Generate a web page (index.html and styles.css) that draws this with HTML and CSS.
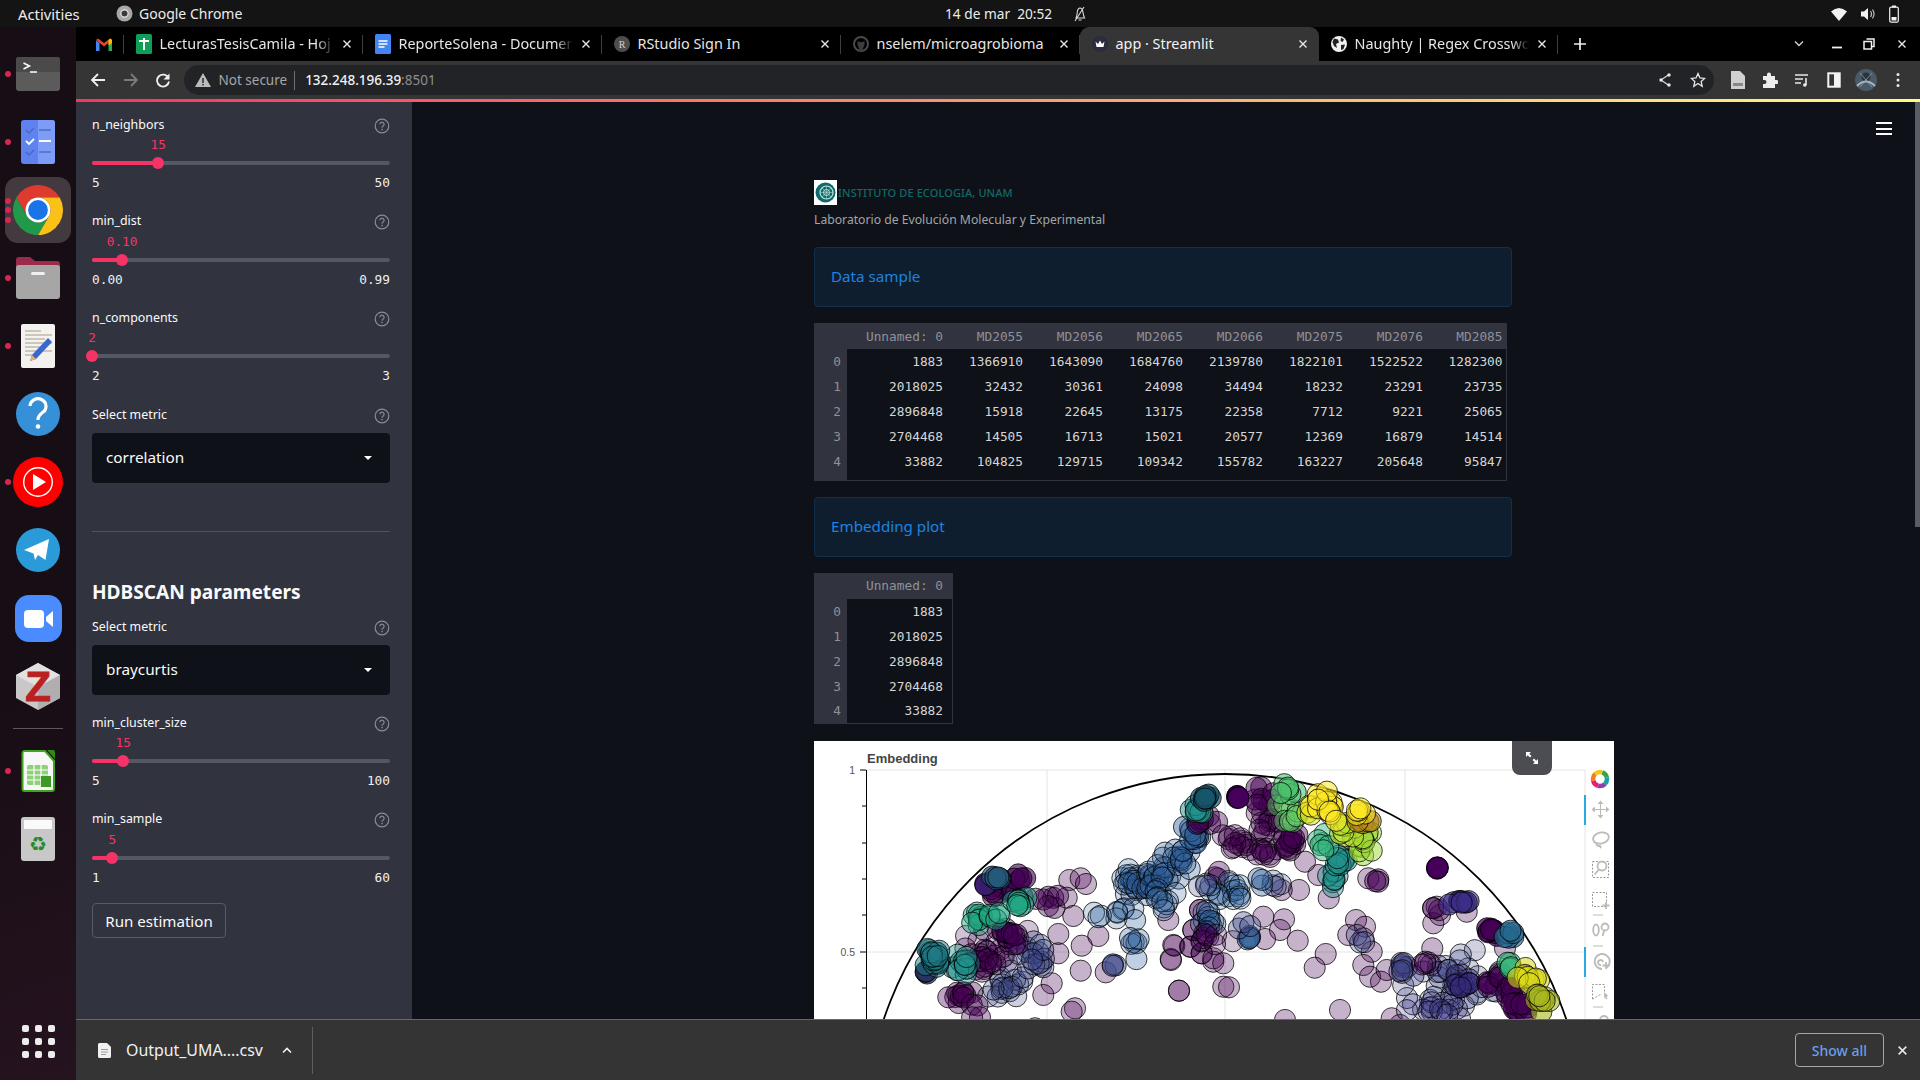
FILE: index.html
```html
<!DOCTYPE html>
<html lang="en">
<head>
<meta charset="utf-8">
<title>app · Streamlit</title>
<link rel="stylesheet" href="styles.css">
</head>
<body>
<svg class="defs" width="0" height="0" aria-hidden="true">
  <symbol id="help" viewBox="0 0 16 16">
    <circle cx="8" cy="8" r="6.8" fill="none" stroke="#8b8c94" stroke-width="1.2"/>
    <path d="M5.9 6.3a2.1 2.1 0 1 1 3.3 1.7c-.8.5-1.2.9-1.2 1.7" fill="none" stroke="#8b8c94" stroke-width="1.2"/>
    <circle cx="8" cy="11.6" r=".8" fill="#8b8c94"/>
  </symbol>
  <symbol id="close" viewBox="0 0 10 10"><path d="M1.5 1.5l7 7M8.5 1.5l-7 7" stroke="#e8e8e8" stroke-width="1.4" fill="none"/></symbol>
</svg>

<header class="topbar">
  <div class="top-left">
    <span class="activities">Activities</span>
    <span class="app-name">
      <svg width="17" height="17" viewBox="0 0 17 17"><circle cx="8.5" cy="8.5" r="8" fill="#a8a8a8"/><circle cx="8.5" cy="8.5" r="3.6" fill="#3a3a3a" stroke="#e5e5e5" stroke-width="1.2"/></svg>
      Google Chrome
    </span>
  </div>
  <div class="top-clock">
    <span>14 de mar&nbsp; 20:52</span>
    <svg width="14" height="16" viewBox="0 0 14 16"><path d="M3 12c1-2 1-4 1.400-6.500C4.800 3 6 2 7 2s2.400 1 2.800 3.500C10.200 8 10.500 10 11.500 12zM5.500 14h3M2 15L11 1" fill="none" stroke="#d8d8d8" stroke-width="1.100"/></svg>
  </div>
  <div class="top-status">
    <svg width="16" height="14" viewBox="0 0 16 14"><path d="M0 4.500Q8-2.500 16 4.500L8 14z" fill="#f2f2f2"/></svg>
    <svg width="16" height="14" viewBox="0 0 16 14"><path d="M1 4.500h3L8 1v12L4 9.500H1z" fill="#f2f2f2"/><path d="M10.500 4q2 3 0 6M12.500 2.500q3 4.500 0 9" fill="none" stroke="#bdbdbd" stroke-width="1.200"/></svg>
    <svg width="10" height="18" viewBox="0 0 10 18"><rect x=".7" y="2.200" width="8.600" height="15" rx="1.500" fill="none" stroke="#f2f2f2" stroke-width="1.200"/><rect x="3" y=".5" width="4" height="2" fill="#f2f2f2"/><rect x="2.500" y="12" width="5" height="3.500" fill="#f2f2f2"/></svg>
  </div>
</header>

<div class="desktop">
  <nav class="dock">
    <div class="slot"><span class="dots"><i></i></span>
      <svg width="44" height="34" viewBox="0 0 44 34"><rect width="44" height="34" rx="3" fill="#5b5b5b"/><path d="M0 15V3a3 3 0 0 1 3-3h38a3 3 0 0 1 3 3v12z" fill="#4a4a4a"/><path d="M7.500 6l6 3-6 3" fill="none" stroke="#fff" stroke-width="1.500"/><path d="M14 15h7" stroke="#fff" stroke-width="1.500"/></svg>
    </div>
    <div class="slot"><span class="dots"><i></i></span>
      <svg width="34" height="44" viewBox="0 0 34 44"><rect width="34" height="44" rx="3" fill="#5f82ee"/><path d="M17 0h14a3 3 0 0 1 3 3v38a3 3 0 0 1-3 3H17z" fill="#7d9cf6"/><path d="M5 10l3 3 5-5M5 32l3 3 5-5" fill="none" stroke="#4a68c8" stroke-width="1.500"/><path d="M5 21l3 3 5-5M18 21h12" fill="none" stroke="#fff" stroke-width="1.800"/><path d="M18 10h12M18 32h12" stroke="#4f6cc6" stroke-width="1.500"/></svg>
    </div>
    <div class="slot">
      <span class="dots"><i></i><i></i><i></i></span>
      <div class="running">
        <svg width="50" height="50" viewBox="0 0 48 48"><path d="M3.200 12A24 24 0 0 1 44.800 12H24A12 12 0 0 0 13.600 30z" fill="#dd3b2f"/><path d="M44.800 12A24 24 0 0 1 24 48L34.400 30A12 12 0 0 0 24 12z" fill="#fbc116"/><path d="M24 48A24 24 0 0 1 3.200 12L13.600 30A12 12 0 0 0 34.400 30z" fill="#22994a"/><circle cx="24" cy="24" r="12" fill="#fff"/><circle cx="24" cy="24" r="9.500" fill="#1a73e8"/></svg>
      </div>
    </div>
    <div class="slot"><span class="dots"><i></i></span>
      <svg width="44" height="42" viewBox="0 0 44 42"><path d="M0 12V3a3 3 0 0 1 3-3h11l5 4h22a3 3 0 0 1 3 3v8z" fill="#9c2a4a"/><rect y="8" width="44" height="34" rx="3" fill="#a6a6a6"/><rect x="15" y="15" width="14" height="3" rx="1.500" fill="#f0f0f0"/></svg>
    </div>
    <div class="slot"><span class="dots"><i></i></span>
      <svg width="34" height="44" viewBox="0 0 34 44"><rect width="34" height="44" rx="2" fill="#f4f2ee"/><path d="M4 7h16M4 11h27M4 15h20M4 19h27M4 23h16M4 27h27M4 31h14" stroke="#bdb9ac" stroke-width="1.400"/><path d="M11 31L27 14l4 4-16 17-6 2z" fill="#3a66d0"/><path d="M9 37l2-6 4 4z" fill="#e8b070"/></svg>
    </div>
    <div class="slot">
      <svg width="44" height="44" viewBox="0 0 44 44"><circle cx="22" cy="22" r="22" fill="#3590d8"/><path d="M14 14a8 7.500 0 1 1 12.500 6.500c-2.800 2-4.500 3.500-4.500 7.500" fill="none" stroke="#fff" stroke-width="3.200"/><circle cx="22" cy="34.500" r="2.300" fill="#fff"/></svg>
    </div>
    <div class="slot"><span class="dots"><i></i></span>
      <svg width="50" height="50" viewBox="0 0 50 50"><circle cx="25" cy="25" r="25" fill="#fe0000"/><circle cx="25" cy="25" r="14.300" fill="none" stroke="#fff" stroke-width="1.400"/><path d="M20 17l13 8-13 8z" fill="#fff"/></svg>
    </div>
    <div class="slot">
      <svg width="44" height="44" viewBox="0 0 44 44"><circle cx="22" cy="22" r="22" fill="#2a9bd8"/><path d="M8 22L33 11 29.500 32 22 27l-3 5-1.500-6.500z" fill="#fff"/></svg>
    </div>
    <div class="slot">
      <svg width="47" height="47" viewBox="0 0 47 47"><rect width="47" height="47" rx="14" fill="#4a8cff"/><rect x="9" y="15" width="20" height="18" rx="4" fill="#fff"/><path d="M31 22l7-6v16l-7-6z" fill="#fff"/></svg>
    </div>
    <div class="slot">
      <svg width="44" height="47" viewBox="0 0 44 47"><path d="M22 0l22 12v23L22 47 0 35V12z" fill="#c9c7c7"/><path d="M22 0l22 12L22 24 0 12z" fill="#e2e0e0"/><path d="M22 47l22-12V12L22 24z" fill="#b0aeae"/><text class="zotero" x="22" y="38" text-anchor="middle">Z</text></svg>
    </div>
    <div class="dock-rule"><span></span></div>
    <div class="slot"><span class="dots"><i></i></span>
      <svg width="34" height="43" viewBox="0 0 34 43"><path d="M1.500 3a2 2 0 0 1 2-2H24l9 10v28a2 2 0 0 1-2 2H3.500a2 2 0 0 1-2-2z" fill="#f7f7f7" stroke="#3fa41f" stroke-width="2"/><path d="M26 0h6a2 2 0 0 1 2 2v7z" fill="#2f8a18"/><rect x="6" y="15" width="21" height="20" rx="2" fill="#8fd07a"/><path d="M6 20h21M6 25h21M6 30h21M13 15v20M20 15v20" stroke="#fff" stroke-width="1.200"/><rect x="20" y="26" width="10" height="11" fill="#3d9a25"/></svg>
    </div>
    <div class="slot">
      <svg width="34" height="44" viewBox="0 0 34 44"><rect width="34" height="44" rx="3" fill="#c8c8c8"/><rect x="3" y="3" width="28" height="9" rx="1" fill="#fafafa"/><text class="recycle" x="17" y="34" text-anchor="middle">♻</text></svg>
    </div>
    <div class="apps"><i></i><i></i><i></i><i></i><i></i><i></i><i></i><i></i><i></i></div>
  </nav>

  <div class="browser">
    <div class="tabstrip">
      <div class="tab pinned">
        <svg width="16" height="13" viewBox="0 0 16 13"><path d="M0 2.500V13h3.500V5z" fill="#4285f4"/><path d="M16 2.500V13h-3.500V5z" fill="#34a853"/><path d="M0 2L2 .5 8 5l6-4.500L16 2 8 8.500z" fill="#ea4335"/><path d="M12.500 2l2-1.500L16 2v3l-3.500 2.500z" fill="#fbbc04"/></svg>
      </div>
      <div class="tab">
        <svg width="16" height="20" viewBox="0 0 16 20"><rect width="16" height="20" rx="1.500" fill="#0f9d58"/><path d="M3 7h10M8 4v12" stroke="#fff" stroke-width="2"/></svg>
        <span class="tab-title fade">LecturasTesisCamila - Hoj</span>
        <svg class="tab-x"><use href="#close"/></svg>
      </div>
      <div class="tab">
        <svg width="16" height="20" viewBox="0 0 16 20"><rect width="16" height="20" rx="1.500" fill="#4285f4"/><path d="M3.500 7h9M3.500 10h9M3.500 13h6" stroke="#fff" stroke-width="1.500"/></svg>
        <span class="tab-title fade">ReporteSolena - Documen</span>
        <svg class="tab-x"><use href="#close"/></svg>
      </div>
      <div class="tab">
        <svg width="16" height="16" viewBox="0 0 16 16"><circle cx="8" cy="8" r="8" fill="#4d4d4d"/><text class="fav-r" x="8" y="11.500" text-anchor="middle">R</text></svg>
        <span class="tab-title">RStudio Sign In</span>
        <svg class="tab-x"><use href="#close"/></svg>
      </div>
      <div class="tab">
        <svg width="16" height="16" viewBox="0 0 16 16"><circle cx="8" cy="8" r="7" fill="none" stroke="#4a4a4a" stroke-width="2"/><path d="M6 15v-3L4.500 9V5l2 1h3l2-1v4L10 12v3z" fill="#3c3c3c"/></svg>
        <span class="tab-title">nselem/microagrobioma</span>
        <svg class="tab-x"><use href="#close"/></svg>
      </div>
      <div class="tab active">
        <svg width="16" height="16" viewBox="0 0 16 16"><circle cx="8" cy="8" r="8" fill="#2a2d3e"/><path d="M3.500 5.500L6 8l2-3.500L10 8l2.500-2.500L11.500 11h-7z" fill="#fff"/></svg>
        <span class="tab-title">app · Streamlit</span>
        <svg class="tab-x"><use href="#close"/></svg>
      </div>
      <div class="tab">
        <svg width="16" height="16" viewBox="0 0 16 16"><circle cx="8" cy="8" r="8" fill="#f1f1f1"/><path d="M3 2.500l4 1 1 3-3 1.500 1 4L3 10 1.500 6zM10 1.500l3 2-1.500 2.500-2-1zM10 9l4-.5-1.500 4.500-2.500 1z" fill="#202124"/></svg>
        <span class="tab-title fade">Naughty | Regex Crosswo</span>
        <svg class="tab-x"><use href="#close"/></svg>
      </div>
      <svg class="tab-plus" width="14" height="14" viewBox="0 0 14 14"><path d="M7 1v12M1 7h12" stroke="#f0f0f0" stroke-width="1.700"/></svg>
      <div class="win-controls">
        <svg width="12" height="8" viewBox="0 0 12 8"><path d="M2 1.500l4 4 4-4" fill="none" stroke="#d8d8d8" stroke-width="1.300"/></svg>
        <svg width="10" height="10" viewBox="0 0 10 10"><path d="M0 8.500h10" stroke="#f0f0f0" stroke-width="1.800"/></svg>
        <svg width="12" height="12" viewBox="0 0 12 12"><path d="M3.500 1h7.500v7.500H9" fill="none" stroke="#f0f0f0" stroke-width="1.500"/><rect x="1" y="3.500" width="7.500" height="7.500" fill="none" stroke="#f0f0f0" stroke-width="1.500"/></svg>
        <svg width="10" height="10"><use href="#close"/></svg>
      </div>
    </div>

    <div class="toolbar">
      <div class="nav-btn"><svg width="16" height="16" viewBox="0 0 16 16"><path d="M15 8H2M8 2L2 8l6 6" fill="none" stroke="#f0f0f0" stroke-width="1.800"/></svg></div>
      <div class="nav-btn"><svg width="16" height="16" viewBox="0 0 16 16"><path d="M1 8h13M8 2l6 6-6 6" fill="none" stroke="#7b7b7b" stroke-width="1.800"/></svg></div>
      <div class="nav-btn"><svg width="16" height="16" viewBox="0 0 16 16"><path d="M13.500 6A6 6 0 1 0 14 9.500" fill="none" stroke="#f0f0f0" stroke-width="1.800"/><path d="M14.500 1.500v6h-6z" fill="#f0f0f0"/></svg></div>
      <div class="omnibox">
        <svg width="16" height="14" viewBox="0 0 16 14"><path d="M8 0l8 14H0z" fill="#bcbcbc"/><path d="M8 5v5M8 11v1.500" stroke="#202124" stroke-width="1.400"/></svg>
        <span class="not-secure">Not secure</span>
        <span class="url"><b>132.248.196.39</b>:8501</span>
        <svg class="omni-icon" width="14" height="14" viewBox="0 0 14 14"><path d="M11 1.500L3 7l8 5.500" fill="none" stroke="#d8d8d8" stroke-width="1.200"/><circle cx="11" cy="2" r="1.700" fill="#e8e8e8"/><circle cx="3" cy="7" r="1.700" fill="#e8e8e8"/><circle cx="11" cy="12" r="1.700" fill="#e8e8e8"/></svg>
        <svg class="omni-icon" width="16" height="16" viewBox="0 0 16 16"><path d="M8 1.500l2 4.400 4.700.5-3.500 3.200 1 4.700L8 11.500l-4.200 2.800 1-4.700L1.300 6.400 6 5.900z" fill="none" stroke="#e8e8e8" stroke-width="1.300"/></svg>
      </div>
      <div class="actions">
        <div class="nav-btn"><svg width="14" height="18" viewBox="0 0 14 18"><path d="M0 0h9l5 5v13H0z" fill="#d0d0d0"/><rect x="2" y="12" width="10" height="3" fill="#888"/></svg></div>
        <div class="nav-btn"><svg width="16" height="16" viewBox="0 0 16 16"><path d="M1 4h4V2.500a2 2 0 0 1 4 0V4h4v4h1.500a2 2 0 0 1 0 4H13v4H1v-4h1.500a2 2 0 0 0 0-4H1z" fill="#ededed"/></svg></div>
        <div class="nav-btn"><svg width="16" height="14" viewBox="0 0 16 14"><path d="M1 2h13M1 6h8M1 10h6" stroke="#e8e8e8" stroke-width="1.500"/><path d="M12 5v7" stroke="#e8e8e8" stroke-width="1.600"/><circle cx="10.800" cy="12" r="1.800" fill="#e8e8e8"/></svg></div>
        <div class="nav-btn"><svg width="14" height="16" viewBox="0 0 14 16"><rect x="1.300" y="1.300" width="11.400" height="13.400" fill="none" stroke="#f4f4f4" stroke-width="2"/><rect x="7" y="1" width="6" height="14" fill="#f4f4f4"/></svg></div>
        <div class="nav-btn"><svg width="24" height="24" viewBox="0 0 24 24"><circle cx="12" cy="12" r="11" fill="#4a5a68"/><circle cx="12" cy="9" r="4.500" fill="#2a343c"/><path d="M3 18q9-9 18 0" fill="none" stroke="#a9b8c2" stroke-width="2"/><path d="M6 5l12 14M18 5L6 19" stroke="#8fa0ab" stroke-width=".8"/></svg></div>
        <div class="nav-btn"><svg width="4" height="16" viewBox="0 0 4 16"><circle cx="2" cy="2.500" r="1.500" fill="#e8e8e8"/><circle cx="2" cy="8" r="1.500" fill="#e8e8e8"/><circle cx="2" cy="13.500" r="1.500" fill="#e8e8e8"/></svg></div>
      </div>
    </div>
    <div class="accent"></div>

    <div class="page">
      <aside class="sidebar">
        <section class="slider">
          <div class="field-label"><span>n_neighbors</span><svg class="help"><use href="#help"/></svg></div>
          <div class="value-row"><span class="value" style="left:22.2%">15</span></div>
          <div class="track"><span class="fill" style="width:22.2%"></span><span class="thumb" style="left:22.2%"></span></div>
          <div class="ticks"><span>5</span><span>50</span></div>
        </section>
        <section class="slider">
          <div class="field-label"><span>min_dist</span><svg class="help"><use href="#help"/></svg></div>
          <div class="value-row"><span class="value" style="left:10.1%">0.10</span></div>
          <div class="track"><span class="fill" style="width:10.1%"></span><span class="thumb" style="left:10.1%"></span></div>
          <div class="ticks"><span>0.00</span><span>0.99</span></div>
        </section>
        <section class="slider">
          <div class="field-label"><span>n_components</span><svg class="help"><use href="#help"/></svg></div>
          <div class="value-row"><span class="value" style="left:0%">2</span></div>
          <div class="track"><span class="thumb" style="left:0%"></span></div>
          <div class="ticks"><span>2</span><span>3</span></div>
        </section>
        <section class="select-field">
          <div class="field-label"><span>Select metric</span><svg class="help"><use href="#help"/></svg></div>
          <div class="select"><span>correlation</span><i class="caret"></i></div>
        </section>
        <hr class="rule">
        <h2 class="side-heading">HDBSCAN parameters</h2>
        <section class="select-field second">
          <div class="field-label"><span>Select metric</span><svg class="help"><use href="#help"/></svg></div>
          <div class="select"><span>braycurtis</span><i class="caret"></i></div>
        </section>
        <section class="slider">
          <div class="field-label"><span>min_cluster_size</span><svg class="help"><use href="#help"/></svg></div>
          <div class="value-row"><span class="value" style="left:10.5%">15</span></div>
          <div class="track"><span class="fill" style="width:10.5%"></span><span class="thumb" style="left:10.5%"></span></div>
          <div class="ticks"><span>5</span><span>100</span></div>
        </section>
        <section class="slider">
          <div class="field-label"><span>min_sample</span><svg class="help"><use href="#help"/></svg></div>
          <div class="value-row"><span class="value" style="left:6.8%">5</span></div>
          <div class="track"><span class="fill" style="width:6.8%"></span><span class="thumb" style="left:6.8%"></span></div>
          <div class="ticks"><span>1</span><span>60</span></div>
        </section>
        <button class="run">Run estimation</button>
      </aside>

      <main class="main">
        <button class="hamburger" aria-label="Menu"><i></i><i></i><i></i></button>
        <div class="scroll-thumb"></div>
        <div class="block">
          <div class="logo">
            <svg width="23" height="25" viewBox="0 0 23 25"><rect width="23" height="25" fill="#fff"/><circle cx="11.500" cy="12.500" r="10" fill="#0f6b6b"/><circle cx="12.500" cy="12.500" r="6.500" fill="none" stroke="#bfe0dc" stroke-width="1.200"/><circle cx="12.500" cy="12.500" r="3" fill="none" stroke="#bfe0dc"/><path d="M6 12.500h13M12.500 6v13M8 8l9 9M17 8l-9 9" stroke="#bfe0dc" stroke-width=".5"/></svg>
            <span>INSTITUTO DE ECOLOGIA, UNAM</span>
          </div>
          <p class="lab">Laboratorio de Evolución Molecular y Experimental</p>
          <div class="stack">
            <div class="info">Data sample</div>
            <table class="frame wide">
              <thead><tr><th></th><th>Unnamed: 0</th><th>MD2055</th><th>MD2056</th><th>MD2065</th><th>MD2066</th><th>MD2075</th><th>MD2076</th><th>MD2085</th></tr></thead>
              <tbody>
                <tr><th>0</th><td>1883</td><td>1366910</td><td>1643090</td><td>1684760</td><td>2139780</td><td>1822101</td><td>1522522</td><td>1282300</td></tr>
                <tr><th>1</th><td>2018025</td><td>32432</td><td>30361</td><td>24098</td><td>34494</td><td>18232</td><td>23291</td><td>23735</td></tr>
                <tr><th>2</th><td>2896848</td><td>15918</td><td>22645</td><td>13175</td><td>22358</td><td>7712</td><td>9221</td><td>25065</td></tr>
                <tr><th>3</th><td>2704468</td><td>14505</td><td>16713</td><td>15021</td><td>20577</td><td>12369</td><td>16879</td><td>14514</td></tr>
                <tr><th>4</th><td>33882</td><td>104825</td><td>129715</td><td>109342</td><td>155782</td><td>163227</td><td>205648</td><td>95847</td></tr>
                <tr class="spare"><th></th><td colspan="8"></td></tr>
              </tbody>
            </table>
            <div class="info">Embedding plot</div>
            <table class="frame narrow">
              <thead><tr><th></th><th>Unnamed: 0</th></tr></thead>
              <tbody>
                <tr><th>0</th><td>1883</td></tr>
                <tr><th>1</th><td>2018025</td></tr>
                <tr><th>2</th><td>2896848</td></tr>
                <tr><th>3</th><td>2704468</td></tr>
                <tr><th>4</th><td>33882</td></tr>
              </tbody>
            </table>
            <div class="plot">
              <div class="expand"><svg width="14" height="14" viewBox="0 0 14 14"><path d="M1 1h5L4.300 2.700 6.500 5 5 6.500 2.700 4.300 1 6zM13 13H8l1.700-1.700L7.500 9 9 7.500l2.300 2.200L13 8z" fill="#fff"/></svg></div>
              <svg class="chart" width="800" height="400" viewBox="814 741 800 400">
                <g class="grid">
                  <path d="M866 770H1585M866 952H1585M1047 770V1141M1225 770V1141M1405 770V1141M1585 770V1141"/>
                </g>
                <circle class="bound" cx="1225" cy="1134" r="360"/>
                <g id="points"></g>
                <path class="axis" d="M866.500 770V1141M860 770H866M860 952H866M862 806H866M862 843H866M862 879H866M862 915H866M862 988H866"/>
                <text class="plot-title" x="867" y="763">Embedding</text>
                <text class="tick-label" x="855" y="774" text-anchor="end">1</text>
                <text class="tick-label" x="855" y="956" text-anchor="end">0.5</text>

                <g class="bk-logo">
                  <circle cx="1600" cy="779" r="7" stroke="#37a34a" stroke-dasharray="7.300 36.700" stroke-dashoffset="9"/>
                  <circle cx="1600" cy="779" r="7" stroke="#18a0a8" stroke-dasharray="7.300 36.700" stroke-dashoffset="1.700"/>
                  <circle cx="1600" cy="779" r="7" stroke="#8e3fa8" stroke-dasharray="7.300 36.700" stroke-dashoffset="-5.600"/>
                  <circle cx="1600" cy="779" r="7" stroke="#e8206e" stroke-dasharray="7.300 36.700" stroke-dashoffset="-12.900"/>
                  <circle cx="1600" cy="779" r="7" stroke="#f47b20" stroke-dasharray="7.300 36.700" stroke-dashoffset="-20.200"/>
                  <circle cx="1600" cy="779" r="7" stroke="#f5c518" stroke-dasharray="7.300 36.700" stroke-dashoffset="-27.500"/>
                </g>
                <rect class="tool-on" x="1584" y="795" width="2" height="30"/>
                <rect class="tool-on" x="1584" y="947" width="2" height="30"/>
                <g class="tool">
                  <path d="M1600.500 802v15M1593 809.500h15"/>
                  <path class="solid" d="M1600.500 800.500l3 3.500h-6zM1600.500 818.500l3-3.500h-6zM1591.500 809.500l3.500-3v6zM1609.500 809.500l-3.500-3v6z"/>
                  <ellipse class="thick" cx="1601" cy="838" rx="8" ry="5.500" transform="rotate(-15 1601 838)"/>
                  <path class="thick" d="M1597 843c-1 2 0 3 2 3s2 1 1 2"/>
                  <rect class="dash" x="1592.500" y="861.500" width="16" height="16"/>
                  <circle class="thick" cx="1602" cy="866" r="4.500" fill="#fff"/>
                  <path class="thick" d="M1599 869.500l-4.500 5"/>
                  <rect class="dash" x="1592.500" y="892.500" width="14" height="14"/>
                  <path class="thick" d="M1606 902v7M1602.500 905.500h7"/>
                  <path d="M1593 915h10M1593 946h10M1593 1007h10"/>
                  <ellipse class="thick" cx="1596" cy="930" rx="2.800" ry="5.500"/>
                  <circle class="thick" cx="1605" cy="927" r="3.500"/>
                  <path class="thick" d="M1604 931l-1.500 5"/>
                  <path class="thick" d="M1606 968a7.500 7.500 0 1 0-4 1"/>
                  <path class="thick" d="M1603 962a2.500 2.500 0 1 0-2 3"/>
                  <path class="thick" d="M1606 962v7M1602.500 965.500h7"/>
                  <path class="dash" d="M1592.500 999V984.500h12v8M1592.500 999l9-5"/>
                  <path class="solid" d="M1604 992l4.500 4-2 .5 1 2.500-1.500.5-1-2.500-1 1.500z"/>
                  <circle class="thick" cx="1604" cy="1020" r="4"/>
                </g>
              </svg>
            </div>
          </div>
        </div>
      </main>
    </div>

    <footer class="downloads">
      <div class="dl-item">
        <svg width="13" height="15" viewBox="0 0 13 15"><path d="M1.500 0H9l4 4v9.500a1.500 1.500 0 0 1-1.500 1.500h-10A1.500 1.500 0 0 1 0 13.500v-12A1.500 1.500 0 0 1 1.500 0z" fill="#f1f1f1"/><path d="M3 6.500h7M3 9h7M3 11.500h5" stroke="#9a9a9a"/></svg>
        <span class="dl-name">Output_UMA....csv</span>
        <svg width="10" height="7" viewBox="0 0 10 7"><path d="M1 5.500l4-4 4 4" fill="none" stroke="#f1f1f1" stroke-width="1.600"/></svg>
      </div>
      <button class="show-all">Show all</button>
      <svg class="dl-close" width="11" height="11"><use href="#close"/></svg>
    </footer>
  </div>
</div>
<script src="plot.js"></script>
</body>
</html>
```

FILE: styles.css
```css
* { box-sizing: border-box; }
html, body { margin: 0; height: 100%; }
body {
  width: 1920px; height: 1080px; overflow: hidden;
  display: flex; flex-direction: column;
  background: #0e1117; color: #fafafa;
  font-family: "Noto Sans", sans-serif;
}
.defs { position: absolute; }
svg { display: block; flex: none; }

/* desktop top bar */
.topbar {
  height: 27px; flex: none; background: #141414;
  display: grid; grid-template-columns: 945px 1fr auto; align-items: center;
  font-size: 14px; color: #ececec;
}
.top-left { display: flex; align-items: center; padding-left: 18px; }
.activities { width: 98px; font-size: 14.800px; }
.app-name { display: flex; align-items: center; gap: 6px; }
.top-clock { display: flex; align-items: center; gap: 21px; font-size: 13.700px; }
.top-status { display: flex; align-items: center; gap: 13px; padding-right: 21px; }

.desktop { flex: 1; display: flex; min-height: 0; }

/* dock */
.dock {
  width: 76px; flex: none; display: flex; flex-direction: column; align-items: stretch;
  padding: 13px 0 22px;
  background: linear-gradient(160deg, #170d14 60%, #25131f);
}
.slot { height: 68px; flex: none; display: flex; align-items: center; justify-content: center; position: relative; }
.dots { position: absolute; left: 5px; top: 0; bottom: 0; z-index: 1; display: flex; flex-direction: column; justify-content: center; gap: 3.500px; }
.dots i { width: 6px; height: 6px; border-radius: 50%; background: #d8274f; display: block; }
.running { width: 66px; height: 66px; border-radius: 13px; background: #423a3e; display: flex; align-items: center; justify-content: center; }
.dock-rule { height: 17px; flex: none; display: flex; align-items: center; padding: 0 13px; }
.dock-rule span { flex: 1; height: 1px; background: #5d565a; }
.apps { margin-top: auto; align-self: center; display: grid; grid-template-columns: repeat(3, 7px); gap: 6px; }
.apps i { width: 7px; height: 7px; border-radius: 2px; background: #ececec; display: block; }
.zotero { font: bold 42px "Liberation Sans", sans-serif; fill: #b8211f; stroke: #b8211f; stroke-width: 1; }
.recycle { font: 20px "DejaVu Sans", sans-serif; fill: #2a8a2a; }

/* browser */
.browser { flex: 1; min-width: 0; display: flex; flex-direction: column; }
.tabstrip { height: 34px; flex: none; background: #000; display: flex; align-items: center; padding-left: 8px; }
.tab {
  width: 239px; height: 34px; flex: none; display: flex; align-items: center; gap: 8px;
  padding: 0 11px 0 12px; position: relative; font-size: 14.400px; color: #e6e6e6;
}
.tab::after { content: ""; position: absolute; right: 0; top: 8px; bottom: 7px; width: 1px; background: #3f3f3f; }
.tab.pinned { width: 39.500px; padding: 0 0 0 12px; }
.tab.active { background: #353535; border-radius: 9px 9px 0 0; color: #f2f2f2; }
.tab.active::after { display: none; }
.tab-title { flex: 1; min-width: 0; white-space: nowrap; margin-top: -2px; }
.tab-title.fade { -webkit-mask-image: linear-gradient(90deg, #000 90%, transparent); mask-image: linear-gradient(90deg, #000 90%, transparent); }
.tab-x { width: 10px; height: 10px; flex: none; }
.fav-r { font: 10px "Liberation Serif", serif; fill: #d0d0d0; }
.tab-plus { margin-left: 15px; }
.win-controls { margin-left: auto; display: flex; align-items: center; padding-right: 13px; }
.win-controls svg:nth-child(1) { margin-right: 27px; }
.win-controls svg:nth-child(2) { margin-right: 21px; }
.win-controls svg:nth-child(3) { margin-right: 22px; }

.toolbar { height: 38px; flex: none; background: #353535; display: flex; align-items: center; padding: 0 6px 0 6px; }
.nav-btn { width: 32.500px; height: 32px; flex: none; display: flex; align-items: center; justify-content: center; }
.omnibox {
  flex: 1; height: 30px; margin: 0 8px 0 4px; border-radius: 15px; background: #222327;
  display: flex; align-items: center; padding: 0 8px 0 11px; font-size: 13.500px;
}
.not-secure { color: #a6a6a6; margin-left: 8px; padding-right: 7px; border-right: 1px solid #707070; line-height: 19px; }
.url { color: #8e8e8e; margin-left: 10px; flex: 1; }
.url b { font-weight: 500; color: #f2f2f2; }
.omni-icon { margin-left: 18px; }
.actions { display: flex; }
.actions .nav-btn { width: 32px; }
.accent { height: 3px; flex: none; background: linear-gradient(90deg, #f63366, #fffd80); }

/* streamlit page */
.page { flex: 1; min-height: 0; display: flex; }
.sidebar { width: 336px; flex: none; background: #31333f; padding: 12px 22px 0 16px; overflow: hidden; font-size: 12.400px; }
.field-label { height: 20px; display: flex; justify-content: space-between; align-items: center; color: #fafafa; }
.help { width: 16px; height: 16px; margin: 3px 0.500px 0 0; }
.slider { height: 78px; margin-bottom: 18.700px; }
.value-row { height: 22px; position: relative; }
.value { position: absolute; top: 0; transform: translateX(-50%); font: 12.800px/22px "DejaVu Sans Mono", monospace; color: #f63366; }
.track { height: 4px; margin: 5px 0; border-radius: 2px; background: #555762; position: relative; }
.fill { display: block; height: 100%; border-radius: 2px; background: #f63366; }
.thumb { position: absolute; top: 50%; width: 12px; height: 12px; margin: -6px 0 0 -6px; border-radius: 50%; background: #f63366; }
.ticks { display: flex; justify-content: space-between; height: 22px; margin-top: 7px; font: 12.800px/22px "DejaVu Sans Mono", monospace; color: #f0f0f0; }
.select-field .field-label { margin-bottom: 9px; }
.select-field.second { margin-bottom: 17px; }
.select {
  height: 50px; border-radius: 4px; background: #0e1117; padding: 0 14px 2px;
  display: flex; align-items: center; justify-content: space-between; font-size: 15.300px;
}
.caret { width: 0; height: 0; border: 4px solid transparent; border-top: 4.500px solid #fff; border-bottom: 0; margin: 2px 4px 0 0; }
.rule { border: 0; height: 1px; background: #50525c; margin: 48px 0 0; }
.side-heading { margin: 47px 0 0; height: 26px; line-height: 26px; font-size: 19.100px; font-weight: 700; }
.side-heading + .select-field { margin-top: 11px; }
.run {
  display: block; width: 134px; height: 35px; padding: 0; border: 1px solid #585a65; border-radius: 4px;
  background: #31333f; color: #fafafa; font: 15.100px "Noto Sans", sans-serif; margin-top: -2px;
}

.main { flex: 1; min-width: 0; position: relative; overflow: hidden; padding: 78px 0 0 402px; background: #0e1117; }
.hamburger { position: absolute; top: 20px; left: 1464px; width: 16px; height: 13px; padding: 0; border: 0; background: none; display: flex; flex-direction: column; justify-content: space-between; }
.hamburger i { display: block; height: 2px; background: #fafafa; }
.scroll-thumb { position: absolute; top: 0; right: 0; width: 5px; height: 425px; background: #5a5c64; }
.block { width: 698px; }
.logo { height: 25px; display: flex; align-items: center; font-size: 11px; color: #0f6a6a; }
.logo span { margin-left: 1px; letter-spacing: .1px; font-weight: 500; }
.lab { margin: 5px 0 17px; height: 20px; line-height: 20px; font-size: 12.200px; color: #a2a5ab; }
.stack { display: flex; flex-direction: column; gap: 16px; align-items: flex-start; }
.info {
  width: 698px; height: 60px; display: flex; align-items: center; padding: 0 0 2px 16px; border: 1px solid #12304c;
  border-radius: 4px; background: #0f1e2e; color: #1c83e1; font-size: 15.200px;
}
.frame { border-collapse: collapse; table-layout: fixed; background: #0e1117; font: 12.800px "DejaVu Sans Mono", monospace; border-right: 1px solid #31333f; border-bottom: 1px solid #31333f; }
.frame.wide { width: 692px; }
.frame.narrow { width: 138px; margin-bottom: 1px; }
.frame th, .frame td { padding: 0 3px 0 0; text-align: right; font-weight: 400; white-space: nowrap; }
.frame thead tr { height: 26px; }
.frame tbody tr { height: 25px; }
.frame tbody tr.spare { height: 6px; }
.frame th { background: #31333f; color: #8f9198; }
.frame td { color: #d6d6d6; }
.frame thead th:first-child { width: 33px; }
.frame tbody th { padding-right: 6px; }
.frame.wide thead th { width: 80px; }
.frame.wide thead th:first-child { width: 33px; }
.frame.wide thead th:nth-child(2) { width: 99px; }
.frame.narrow thead th:nth-child(2) { width: 105px; padding-right: 8.500px; }
.frame.narrow td { padding-right: 8.500px; }
.plot { width: 800px; height: 400px; background: #fff; position: relative; flex: none; }
.expand { position: absolute; top: 0; left: 698px; width: 40px; height: 34px; border-radius: 0 0 8px 8px; background: #4b4d53; display: flex; align-items: center; justify-content: center; }
.grid path { stroke: #e4e4e4; stroke-width: 1; fill: none; }
.bound { fill: none; stroke: #000; stroke-width: 1.800; }
.axis { stroke: #000; stroke-width: 1; fill: none; }
.plot-title { font: bold 13px "Liberation Sans", sans-serif; fill: #444; }
.tick-label { font: 10.500px "Liberation Sans", sans-serif; fill: #555; }
.bk-logo circle { fill: none; stroke-width: 4.500; }
.tool-on { fill: #26aae1; }
.tool { fill: none; stroke: #bbb; stroke-width: 1; }
.tool .solid { fill: #bbb; stroke: none; }
.tool .thick { stroke-width: 1.800; }
.tool .dash { stroke-dasharray: 2 1.500; stroke: #999; }

.downloads { height: 61px; flex: none; background: #343434; border-top: 1px solid #686868; display: flex; align-items: center; font-size: 15.900px; }
.dl-item { width: 237px; height: 47px; display: flex; align-items: center; padding-left: 22px; border-right: 1px solid #5e5e5e; color: #f0f0f0; }
.dl-name { margin: 0 19px 0 15px; white-space: nowrap; }
.show-all {
  margin-left: auto; width: 89px; height: 34px; padding: 0; border: 1px solid #a6a6a6; border-radius: 4px;
  background: transparent; color: #6a9fec; font: 500 14px "Noto Sans", sans-serif;
}
.dl-close { margin: 0 12px 0 13px; }
```

FILE: plot.js
```js
// Scatter of the embedding. Positions are given in two local frames (third-pixel
// units, with an x origin each), which is how the data was read off the plot.
(function () {
  var OUT = '#440154', DARK = '#440154', BLUE = '#2f5f9a', INDIGO = '#3e4989',
      TEAL = '#21918c', GREEN = '#22a884', LIME = '#5ec962', YEL = '#fde725';

  var seed = 1337;
  function rnd() {
    seed = (seed + 0x6D2B79F5) | 0;
    var t = Math.imul(seed ^ (seed >>> 15), 1 | seed);
    t = (t + Math.imul(t ^ (t >>> 7), 61 | t)) ^ t;
    return ((t ^ (t >>> 14)) >>> 0) / 4294967296;
  }
  function gauss() { return (rnd() + rnd() + rnd() - 1.5) / 0.75; }

  var left = { o: 810,
    lone: [[778,435],[812,430],[828,447],[770,488],[790,543],[745,597],[865,603],[815,632],[812,707],[887,712],
           [675,880],[795,820],[785,830],[1107,767],[1082,672],[1093,632],[1150,585],[725,745],[700,780],[745,655],
           [1140,635],[1175,655],[1210,680],[1240,755],[1170,525],[1075,555]],
    groups: [
      [560,650,70,45,18,OUT,.24],
      [960,450,32,38,14,BLUE,.24],
      [1010,440,32,34,16,BLUE,.28],
      [1060,420,34,34,16,BLUE,.3],
      [1110,365,28,28,14,BLUE,.3],
      [1060,490,34,30,10,BLUE,.24],
      [930,530,25,20,6,BLUE,.22],
      [880,545,22,18,3,BLUE,.22],
      [975,620,18,40,7,BLUE,.3],
      [915,692,8,6,3,INDIGO,.45],
      [1150,295,26,22,12,BLUE,.44],
      [1180,250,25,15,8,DARK,.38],
      [590,755,40,30,18,INDIGO,.26],
      [670,670,32,35,16,INDIGO,.32],
      [520,690,30,25,17,DARK,.28],
      [460,785,32,22,13,DARK,.36],
      [510,840,16,10,2,DARK,.34],
      [590,600,30,25,14,DARK,.4],
      [720,505,25,22,7,DARK,.38],
      [600,465,45,18,10,DARK,.55],
      [640,430,22,10,5,DARK,.62],
      [535,450,8,6,4,'#3b1c6e',.75],
      [565,430,16,8,6,'#26587a',.7],
      [510,560,25,25,10,GREEN,.46],
      [560,545,22,12,5,GREEN,.42],
      [640,500,25,14,8,GREEN,.5],
      [350,715,14,6,3,'#26305c',.75],
      [450,690,30,22,13,TEAL,.42],
      [375,670,18,20,26,'#1f7a86',.5],
      [1165,225,14,12,9,TEAL,.5],
      [1187,190,12,8,12,'#17566a',.68]
    ] };

  var right = { o: 1150,
    lone: [[70,630],[63,675],[122,635],[155,655],[190,670],[220,685],[150,525],[130,585],[175,605],[340,545],
           [402,553],[390,585],[345,612],[443,617],[87,767],[237,757],[527,657],[494,698],[618,555],[595,600],
           [645,575],[640,610],[665,650],[570,825],[405,855],[640,690],[660,725],[693,740],[710,705],[536,490],
           [447,465],[505,420],[395,465],[655,430],[860,515],[870,540],[850,565],[950,530],[847,640],[1065,640],
           [725,850],[750,870],[465,380],[335,305]],
    groups: [
      [265,330,30,30,14,DARK,.28],
      [350,260,28,25,12,DARK,.28],
      [350,350,30,20,9,DARK,.28],
      [415,320,26,20,14,DARK,.42],
      [340,190,25,22,9,DARK,.48],
      [200,420,14,12,3,DARK,.36],
      [240,470,45,30,16,BLUE,.24],
      [165,455,18,12,3,INDIGO,.26],
      [190,560,30,25,12,BLUE,.26],
      [385,450,16,12,4,INDIGO,.26],
      [325,440,10,10,3,BLUE,.36],
      [180,610,40,15,9,DARK,.24],
      [300,608,8,8,4,BLUE,.46],
      [285,570,18,10,3,INDIGO,.36],
      [640,610,12,18,3,INDIGO,.3],
      [675,445,8,10,3,DARK,.4],
      [860,530,14,15,3,DARK,.34],
      [920,740,110,55,42,INDIGO,.25],
      [860,825,60,20,16,'#3e3a8a',.25],
      [760,700,20,22,9,'#414487',.4],
      [830,690,25,15,4,DARK,.26],
      [945,745,22,20,8,'#34287a',.42],
      [1040,730,22,22,9,DARK,.44],
      [1080,770,30,25,9,DARK,.5],
      [1110,825,22,15,11,DARK,.65],
      [1020,590,18,10,9,DARK,.72],
      [1082,600,16,12,6,'#26688e',.68],
      [925,505,24,10,10,'#3c2f88',.58],
      [262,187,5,5,5,'#46005c',.9],
      [862,400,2,2,4,'#46005c',.92],
      [550,430,18,16,8,TEAL,.42],
      [570,370,18,18,10,TEAL,.5],
      [515,325,20,20,6,'#2fb47c',.46],
      [640,320,24,32,13,'#a0da39',.5],
      [590,290,20,22,9,'#b5de2b',.55],
      [420,235,28,20,9,LIME,.46],
      [420,165,28,14,6,'#4ac16d',.58],
      [480,225,14,14,4,'#d8e219',.55],
      [640,265,16,12,5,'#b5891a',.6],
      [620,230,22,14,5,YEL,.55],
      [530,215,32,28,18,'#fde725',.55],
      [1075,690,16,12,4,'#35b779',.55],
      [1140,730,26,22,10,'#d9d91a',.58],
      [1180,800,26,22,10,'#a8b820',.6]
    ] };

  var dots = [];
  function add(zone, x, y, color, alpha) {
    dots.push({ x: zone.o + x / 3, y: 735 + y / 3, c: color, a: alpha });
  }
  [left, right].forEach(function (zone) {
    zone.lone.forEach(function (p) { add(zone, p[0], p[1], OUT, .3); });
  });
  [left, right].forEach(function (zone) {
    zone.groups.forEach(function (g) {
      for (var i = 0; i < g[4]; i++) {
        add(zone, g[0] + gauss() * g[2], g[1] + gauss() * g[3], g[5], g[6]);
      }
    });
  });

  var NS = 'http://www.w3.org/2000/svg';
  var layer = document.getElementById('points');
  dots.forEach(function (d) {
    var c = document.createElementNS(NS, 'circle');
    c.setAttribute('cx', d.x.toFixed(1));
    c.setAttribute('cy', d.y.toFixed(1));
    c.setAttribute('r', '10.6');
    c.setAttribute('fill', d.c);
    c.setAttribute('fill-opacity', d.a);
    c.setAttribute('stroke', '#000');
    c.setAttribute('stroke-opacity', '.75');
    c.setAttribute('stroke-width', '1');
    layer.appendChild(c);
  });
})();
```
